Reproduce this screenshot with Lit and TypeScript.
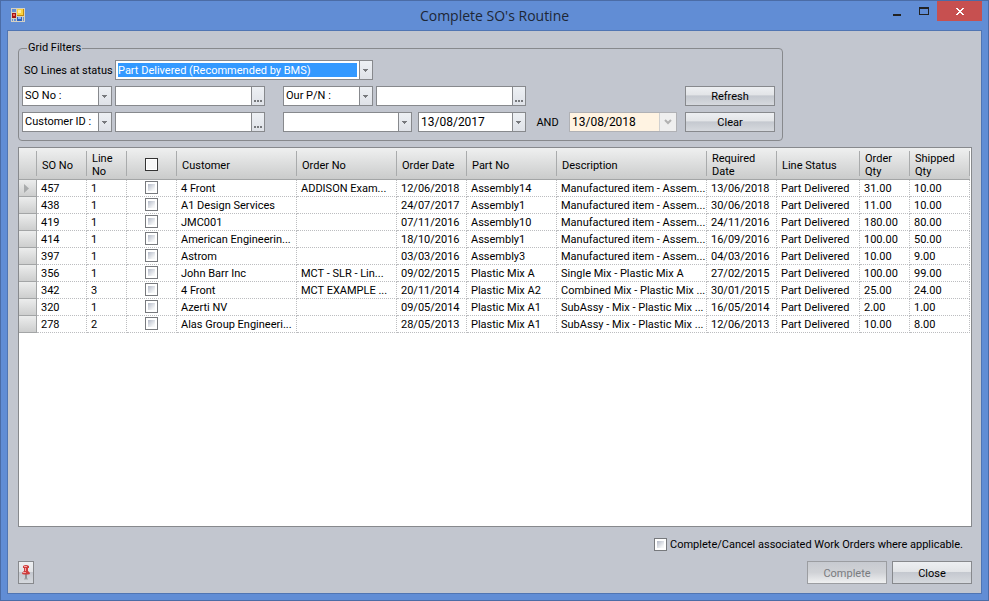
import { LitElement, html, css, nothing } from "lit";
import { customElement } from "lit/decorators.js";

interface OrderLine {
  so: string;
  line: string;
  customer: string;
  orderNo: string;
  orderDate: string;
  part: string;
  description: string;
  required: string;
  ordered: string;
  shipped: string;
}

const fields = (...v: string[]): OrderLine => ({
  so: v[0], line: v[1], customer: v[2], orderNo: v[3], orderDate: v[4],
  part: v[5], description: v[6], required: v[7], ordered: v[8], shipped: v[9],
});

const LINES: OrderLine[] = [
  fields("457", "1", "4 Front", "ADDISON Exam...", "12/06/2018", "Assembly14", "Manufactured item - Assem...", "13/06/2018", "31.00", "10.00"),
  fields("438", "1", "A1 Design Services", "", "24/07/2017", "Assembly1", "Manufactured item - Assem...", "30/06/2018", "11.00", "10.00"),
  fields("419", "1", "JMC001", "", "07/11/2016", "Assembly10", "Manufactured item - Assem...", "24/11/2016", "180.00", "80.00"),
  fields("414", "1", "American Engineerin...", "", "18/10/2016", "Assembly1", "Manufactured item - Assem...", "16/09/2016", "100.00", "50.00"),
  fields("397", "1", "Astrom", "", "03/03/2016", "Assembly3", "Manufactured item - Assem...", "04/03/2016", "10.00", "9.00"),
  fields("356", "1", "John Barr Inc", "MCT - SLR - Lin...", "09/02/2015", "Plastic Mix A", "Single Mix - Plastic Mix A", "27/02/2015", "100.00", "99.00"),
  fields("342", "3", "4 Front", "MCT EXAMPLE ...", "20/11/2014", "Plastic Mix A2", "Combined Mix - Plastic Mix ...", "30/01/2015", "25.00", "24.00"),
  fields("320", "1", "Azerti NV", "", "09/05/2014", "Plastic Mix A1", "SubAssy - Mix - Plastic Mix ...", "16/05/2014", "2.00", "1.00"),
  fields("278", "2", "Alas Group Engineeri...", "", "28/05/2013", "Plastic Mix A1", "SubAssy - Mix - Plastic Mix ...", "12/06/2013", "10.00", "8.00"),
];

const arrow = html`<svg class="arrow" viewBox="0 0 5 3" width="5" height="3" shape-rendering="crispEdges" aria-hidden="true">
  <path d="M0 0h5v1h-1v1h-1v1h-1v-1h-1v-1h-1z" fill="#77797d" />
</svg>`;

const dots = html`<svg class="dots" viewBox="0 0 8 2" width="8" height="2" shape-rendering="crispEdges" aria-hidden="true">
  <path d="M0 0h2v2h-2zM3 0h2v2h-2zM6 0h2v2h-2z" fill="#77797d" />
</svg>`;

@customElement("app-root")
export class AppRoot extends LitElement {
  static styles = css`
    :host {
      display: block;
      font: 11px/14px Roboto, "Liberation Sans", sans-serif;
      color: #000;
    }
    * { box-sizing: border-box; }
    button, input, select { font: inherit; color: inherit; margin: 0; padding: 0; border-radius: 0; }
    .window {
      display: flex;
      flex-direction: column;
      min-height: 100vh;
      padding: 0 6px 6px;
      border: 1px solid #4b6ca6;
      background: #618dd5;
    }
    .titlebar {
      display: grid;
      grid-template-columns: 1fr auto 1fr;
      height: 29px;
    }
    .app-icon { margin: 7px 0 0 4px; }
    .title {
      margin: 0;
      font: 14px/29px "Open Sans", "Noto Sans", sans-serif;
      color: #1d2736;
    }
    .controls { display: flex; justify-content: flex-end; }
    .control {
      display: flex;
      align-items: center;
      justify-content: center;
      width: 27px;
      height: 20px;
      border: 0;
      background: none;
    }
    .control.shut { width: 45px; background: #c75050; }
    .client {
      flex: 1;
      display: flex;
      flex-direction: column;
      padding: 10px 9px 9px 10px;
      border: 1px solid #5075b3;
      background: #c2c6cf;
    }
    .filters {
      display: flex;
      flex-direction: column;
      gap: 6px;
      width: 765px;
      max-width: 100%;
      margin: 0 0 6px;
      padding: 5px 7px 8px 3px;
      border: 1px solid #87898d;
      border-radius: 4px;
    }
    .legend { margin-left: 5px; padding: 0 1px; line-height: 14px; }
    .filter-row { display: flex; align-items: center; height: 20px; }
    .status-label { width: 93px; padding: 2px 0 0 2px; white-space: nowrap; }
    .field {
      display: flex;
      height: 20px;
      border: 1px solid #87898d;
      background: #fff;
      position: relative;
    }
    .w90 { width: 90px; }
    .w108 { width: 108px; }
    .w129 { width: 129px; }
    .w150 { width: 150px; }
    .w258 { width: 258px; }
    .near { margin-left: 3px; }
    .mid { margin-left: 6px; }
    .far { margin-left: 18px; }
    .field input, .field select {
      flex: 1;
      min-width: 0;
      border: 0;
      outline: 0;
      background: none;
      appearance: none;
      padding: 0 2px;
    }
    .field .date { font-size: 12px; }
    .field select { padding-right: 14px; }
    .field .chosen {
      margin: 2px 15px 2px 2px;
      padding: 1px 0 0;
      background: #3399ff;
      color: #fff;
    }
    .drop {
      display: flex;
      align-items: center;
      justify-content: center;
      width: 13px;
      border: 0;
      border-left: 1px solid #87898d;
      background: linear-gradient(#edf0f4, #dfe2e8);
    }
    .field .drop { padding-right: 1px; }
    span.drop { position: absolute; top: 0; right: 0; bottom: 0; pointer-events: none; }
    .field .drop.more { align-items: flex-end; padding: 0 0 3px; }
    .field.disabled { border-color: #b0b1b5; background: #fff3e2; }
    .disabled .drop { width: 17px; border-left: 1px solid #d0d0d0; background: #efefef; }
    .and { width: 43px; padding-top: 2px; text-align: center; }
    .push {
      height: 20px;
      padding-top: 2px;
      border: 1px solid #87898d;
      background: linear-gradient(#edeff2 0%, #e2e4e7 46%, #c4c8cf 48%, #d6d9de 100%);
    }
    .filter-row .push { width: 90px; margin-left: auto; }
    .grid {
      flex: 1;
      overflow: hidden;
      border: 1px solid #87898d;
      background: #fff;
    }
    .lines {
      width: calc(100% - 1px);
      table-layout: fixed;
      border-collapse: separate;
      border-spacing: 0;
    }
    .c18 { width: 18px; }
    .c40 { width: 40px; }
    .c50 { width: 50px; }
    .c60 { width: 60px; }
    .c70 { width: 70px; }
    .c83 { width: 83px; }
    .c90 { width: 90px; }
    .c100 { width: 100px; }
    .c120 { width: 120px; }
    .head { background: linear-gradient(#eff0f0, #dcdddd 50%, #c9caca); }
    .lines th {
      height: 32px;
      padding: 3px 0 0 5px;
      border-bottom: 1px solid #a3a5a6;
      background: linear-gradient(#a9abac, #a9abac) right 3px / 1px 25px no-repeat;
      font-weight: normal;
      line-height: 13px;
      text-align: left;
    }
    .lines td {
      height: 17px;
      padding: 1px 0 0 4px;
      overflow: hidden;
      border-right: 1px dotted #bcbdc0;
      border-bottom: 1px dotted #bcbdc0;
      line-height: 15px;
      white-space: nowrap;
    }
    .lines .tick { padding: 0; }
    .lines th.tick { padding: 2px 1px 0 0; }
    .lines td.tick { vertical-align: top; padding-top: 1px; }
    .lines .tick input { display: block; margin: 0 auto; }
    .lines .stub {
      padding: 0;
      border-right: 1px solid #a3a5a6;
      border-bottom: 1px solid #a3a5a6;
      background: linear-gradient(#eceded, #cdcece);
    }
    .marker { display: block; margin-left: 5px; }
    .check {
      appearance: none;
      width: 13px;
      height: 13px;
      padding: 1px;
      border: 1px solid #77797d;
      background: linear-gradient(135deg, #b4bac8, #f6f7f8 80%) content-box, #fff;
    }
    .lines .check, .option .check { padding: 2px; box-shadow: inset 0 0 0 1px #fff; }
    .lines .check.all { padding: 0; border-color: #333; background: #f7f7f7; }
    .option {
      display: flex;
      align-items: center;
      align-self: flex-end;
      gap: 3px;
      height: 14px;
      margin: 10px 9px 10px 0;
    }
    .option span { padding-top: 2px; }
    .actions { display: flex; gap: 5px; }
    .actions .push { width: 80px; height: 23px; }
    .actions .pin {
      display: flex;
      align-items: center;
      justify-content: center;
      width: 16px;
      padding: 0;
      margin-right: auto;
    }
    .actions .push:disabled {
      border-color: #9b9da1;
      background: linear-gradient(#c7cad0, #d0d2d6 50%, #eff0f1);
      color: #797b7f;
    }
  `;

  private select(label: string, width: string, value: string) {
    return html`<div class="field ${width}">
      <select aria-label=${label}><option>${value}</option></select>
      <span class="drop">${arrow}</span>
    </div>`;
  }

  private lookup(label: string) {
    return html`<div class="field w150 near">
      <input type="text" aria-label=${label} />
      <button class="drop more" aria-label="Browse">${dots}</button>
    </div>`;
  }

  render() {
    return html`<div class="window">
      <header class="titlebar">
        <svg class="app-icon" viewBox="0 0 14 14" width="14" height="14" shape-rendering="crispEdges" aria-hidden="true">
          <path fill="#d3d0c4" d="M0 0h14v14H0z" />
          <path fill="#6690d2" d="M1 1h4v3H1zM1 11h1v2H1zM3 11h2v2H3zM12 9h1v4h-1z" />
          <path fill="#a31414" d="M1 5h4v5H1z" /><path fill="#ee6a5a" d="M2 6h2v2H2z" />
          <path fill="#c48a0c" d="M6 1h7v7H6z" /><path fill="#fbd33f" d="M6 1h6v6H6z" /><path fill="#ffeb9a" d="M7 2h3v3H7z" />
          <path fill="#2f62c0" d="M6 9h5v4H6z" /><path fill="#8cb5f0" d="M7 9h3v2H7z" />
        </svg>
        <h1 class="title">Complete SO's Routine</h1>
        <div class="controls">
          <button class="control" aria-label="Minimise">
            <svg viewBox="0 0 8 10" width="8" height="10" shape-rendering="crispEdges"><path fill="#222" d="M0 8h8v2H0z" /></svg>
          </button>
          <button class="control" aria-label="Maximise">
            <svg viewBox="0 0 10 8" width="10" height="8" shape-rendering="crispEdges"><path fill="#222" fill-rule="evenodd" d="M0 0h10v8H0zM1 2v5h8V2z" /></svg>
          </button>
          <button class="control shut" aria-label="Close window">
            <svg viewBox="0 0 8 7" width="8" height="7" shape-rendering="crispEdges"><path fill="#fff" d="M0 0h2v1h1v1h2v-1h1v-1h2v1h-1v1h-1v1h-1v1h1v1h1v1h1v1h-2v-1h-1v-1h-2v1h-1v1h-2v-1h1v-1h1v-1h1v-1h-1v-1h-1v-1h-1z" /></svg>
          </button>
        </div>
      </header>
      <main class="client">
        <fieldset class="filters">
          <legend class="legend">Grid Filters</legend>
          <div class="filter-row">
            <label class="status-label" for="status">SO Lines at status</label>
            <div class="field w258">
              <select id="status" class="chosen"><option>Part Delivered (Recommended by BMS)</option></select>
              <span class="drop">${arrow}</span>
            </div>
          </div>
          <div class="filter-row">
            ${this.select("Order field", "w90", "SO No :")}
            ${this.lookup("SO number")}
            ${this.select("Part field", "w90 far", "Our P/N :")}
            ${this.lookup("Part number")}
            <button class="push">Refresh</button>
          </div>
          <div class="filter-row">
            ${this.select("Customer field", "w90", "Customer ID :")}
            ${this.lookup("Customer")}
            ${this.select("Date field", "w129 far", "")}
            <div class="field w108 mid">
              <input class="date" type="text" aria-label="From date" value="13/08/2017" />
              <button class="drop" aria-label="Pick from date">${arrow}</button>
            </div>
            <span class="and">AND</span>
            <div class="field w108 disabled">
              <input class="date" type="text" aria-label="To date" value="13/08/2018" disabled />
              <button class="drop" aria-label="Pick to date" disabled>
                <svg viewBox="0 0 8 6" width="8" height="6" aria-hidden="true"><path d="M1 1l3 3 3-3" fill="none" stroke="#b2b2b2" stroke-width="2" /></svg>
              </button>
            </div>
            <button class="push">Clear</button>
          </div>
        </fieldset>
        <div class="grid">
          <table class="lines">
            <colgroup>
              <col class="c18" /><col class="c50" /><col class="c40" /><col class="c50" /><col class="c120" />
              <col class="c100" /><col class="c70" /><col class="c90" /><col /><col class="c70" />
              <col class="c83" /><col class="c50" /><col class="c60" />
            </colgroup>
            <thead class="head">
              <tr>
                <th></th><th>SO No</th><th>Line<br />No</th>
                <th class="tick"><input class="check all" type="checkbox" aria-label="Select all" /></th>
                <th>Customer</th><th>Order No</th><th>Order Date</th><th>Part No</th><th>Description</th>
                <th>Required<br />Date</th><th>Line Status</th><th>Order<br />Qty</th><th>Shipped<br />Qty</th>
              </tr>
            </thead>
            <tbody>
              ${LINES.map((l, i) => html`<tr>
                <td class="stub">${i === 0
                  ? html`<svg class="marker" viewBox="0 0 5 9" width="5" height="9" aria-hidden="true"><path d="M0 0l5 4.5-5 4.5z" fill="#a9abac" /></svg>`
                  : nothing}</td>
                <td>${l.so}</td><td>${l.line}</td>
                <td class="tick"><input class="check" type="checkbox" aria-label="Select SO ${l.so}" /></td>
                <td>${l.customer}</td><td>${l.orderNo}</td><td>${l.orderDate}</td><td>${l.part}</td>
                <td>${l.description}</td><td>${l.required}</td><td>Part Delivered</td>
                <td>${l.ordered}</td><td>${l.shipped}</td>
              </tr>`)}
            </tbody>
          </table>
        </div>
        <label class="option">
          <input class="check" type="checkbox" />
          <span>Complete/Cancel associated Work Orders where applicable.</span>
        </label>
        <footer class="actions">
          <button class="push pin" aria-label="Pin window">
            <svg viewBox="0 0 8 16" width="8" height="16" aria-hidden="true">
              <path d="M3 8h2v6H3z" fill="#8f9194" />
              <path d="M2 13h4v2H2z" fill="#a4a6aa" opacity="0.5" />
              <path d="M1 1q3-2 6 0v2H6v3q2 1 2 3-4 1-8 0 0-2 2-3V3H1z" fill="#cf3d3d" />
              <path d="M2 1h3v1H2zM3 3h1v3H3zM1 7h3v1H1z" fill="#f4a5a5" />
            </svg>
          </button>
          <button class="push" disabled>Complete</button>
          <button class="push">Close</button>
        </footer>
      </main>
    </div>`;
  }
}
